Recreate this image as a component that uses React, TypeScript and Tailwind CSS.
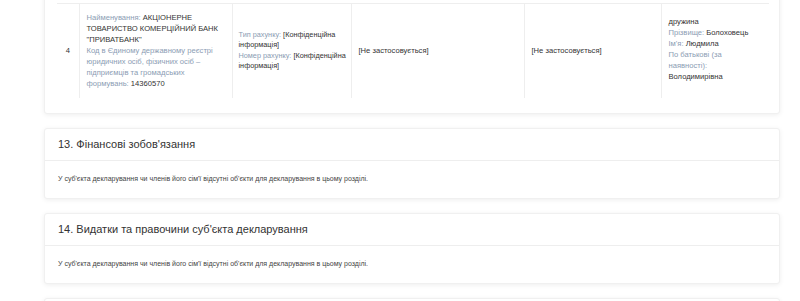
const FONT = { fontFamily: '"Liberation Sans", Arial, sans-serif' };

function Label({ children }: { children: React.ReactNode }) {
  return <span className="text-[#8b9cb3]">{children}</span>;
}

function EmptySection({ title }: { title: string }) {
  return (
    <div className="rounded-[3px] border border-[#f0f0f0] bg-white shadow-[0_1px_5px_rgba(0,0,0,0.07)]">
      <div className="flex h-[32px] items-center border-b border-[#eeeeee] px-[13px] text-[11px] text-[#333]">
        {title}
      </div>
      <div className="flex h-[37px] items-center px-[13px] text-[7px] text-[#444]">
        У суб'єкта декларування чи членів його сім'ї відсутні об'єкти для декларування в цьому розділі.
      </div>
    </div>
  );
}

export default function App() {
  return (
    <div className="h-[301px] w-[800px] overflow-hidden bg-white" style={FONT}>
      <div className="ml-[44px] mr-[20px] flex flex-col gap-[14px]">
        {/* Банківські рахунки — кінець таблиці */}
        <div className="-mt-[11px] rounded-[3px] border border-[#f0f0f0] bg-white pb-[15px] pl-[12px] pr-[12px] pt-[13px] shadow-[0_1px_5px_rgba(0,0,0,0.07)]">
          <table className="w-[712px] table-fixed border-collapse text-[7.6px] leading-[11px] text-[#333]">
            <colgroup>
              <col className="w-[22px]" />
              <col className="w-[153px]" />
              <col className="w-[119px]" />
              <col className="w-[173px]" />
              <col className="w-[137px]" />
              <col className="w-[108px]" />
            </colgroup>
            <tbody>
              <tr className="h-[94px] border-t border-[#eeeeee]">
                <td className="border-r border-[#eeeeee] text-center align-middle">4</td>
                <td className="border-r border-[#eeeeee] px-[7px] align-middle">
                  <Label>Найменування: </Label>АКЦІОНЕРНЕ ТОВАРИСТВО КОМЕРЦІЙНИЙ БАНК "ПРИВАТБАНК"
                  <br />
                  <Label>Код в Єдиному державному реєстрі юридичних осіб, фізичних осіб – підприємців та громадських формувань: </Label>
                  14360570
                </td>
                <td className="border-r border-[#eeeeee] pl-[6px] pr-0 align-middle text-[7.3px] leading-[10.5px]">
                  <span className="whitespace-nowrap">
                    <Label>Тип рахунку:</Label> [Конфіденційна
                  </span>{" "}
                  інформація]
                  <br />
                  <span className="whitespace-nowrap">
                    <Label>Номер рахунку:</Label> [Конфіденційна
                  </span>{" "}
                  інформація]
                </td>
                <td className="border-r border-[#eeeeee] px-[7px] align-middle">[Не застосовується]</td>
                <td className="border-r border-[#eeeeee] px-[7px] align-middle">[Не застосовується]</td>
                <td className="px-[7px] pb-[4px] align-middle">
                  дружина
                  <br />
                  <Label>Прізвище: </Label>Болоховець
                  <br />
                  <Label>Ім'я: </Label>Людмила
                  <br />
                  <Label>По батькові (за наявності): </Label>
                  <br />
                  Володимирівна
                </td>
              </tr>
            </tbody>
          </table>
        </div>

        <EmptySection title="13. Фінансові зобов'язання" />
        <EmptySection title="14. Видатки та правочини суб'єкта декларування" />

        <div className="h-[40px] rounded-[3px] border border-[#f0f0f0] bg-white shadow-[0_1px_5px_rgba(0,0,0,0.07)]" />
      </div>
    </div>
  );
}
